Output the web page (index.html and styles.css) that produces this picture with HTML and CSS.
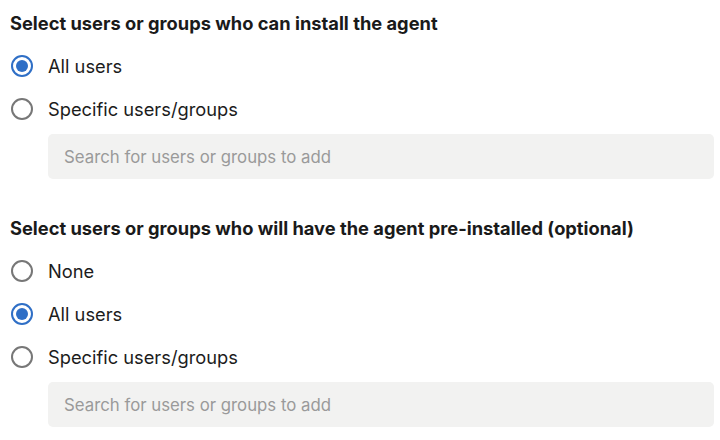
FILE: index.html
```html
<!DOCTYPE html>
<html lang="en">
<head>
<meta charset="utf-8">
<link rel="stylesheet" href="styles.css">
</head>
<body>
<div class="page">
  <section class="group">
    <h2 class="heading">Select users or groups who can install the agent</h2>
    <div class="options">
      <label class="option"><span class="radio checked"></span><span class="label">All users</span></label>
      <label class="option"><span class="radio"></span><span class="label">Specific users/groups</span></label>
    </div>
    <div class="search">Search for users or groups to add</div>
  </section>
  <section class="group">
    <h2 class="heading">Select users or groups who will have the agent pre-installed (optional)</h2>
    <div class="options">
      <label class="option"><span class="radio"></span><span class="label">None</span></label>
      <label class="option"><span class="radio checked"></span><span class="label">All users</span></label>
      <label class="option"><span class="radio"></span><span class="label">Specific users/groups</span></label>
    </div>
    <div class="search">Search for users or groups to add</div>
  </section>
</div>
</body>
</html>
```
FILE: styles.css
```css
html, body {
  margin: 0;
  padding: 0;
  background: #ffffff;
}
body {
  font-family: Inter, "Noto Sans", sans-serif;
  color: #1c1c1c;
}
.page {
  padding: 10px 6px 0 10px;
  display: flex;
  flex-direction: column;
  gap: 36px;
}
.group {
  display: flex;
  flex-direction: column;
}
.heading {
  margin: 0;
  font-size: 18.3px;
  font-weight: 700;
  line-height: 26px;
  color: #1a1a1a;
}
.options {
  display: flex;
  flex-direction: column;
  margin-top: 8px;
}
.option {
  display: flex;
  align-items: center;
  gap: 15px;
  height: 43px;
  padding-left: 1px;
}
.radio {
  width: 22px;
  height: 22px;
  box-sizing: border-box;
  border: 2px solid #777777;
  border-radius: 50%;
  display: flex;
  align-items: center;
  justify-content: center;
  flex: none;
}
.radio.checked {
  border-color: #2f6fc6;
}
.radio.checked::after {
  content: "";
  width: 12px;
  height: 12px;
  border-radius: 50%;
  background: #2f6fc6;
}
.label {
  font-size: 18.3px;
  color: #1c1c1c;
}
.search {
  margin: 4px 0 0 38px;
  height: 45px;
  box-sizing: border-box;
  padding: 0 16px;
  display: flex;
  align-items: center;
  background: #f2f2f1;
  border-radius: 5px;
  font-size: 16.8px;
  color: #9a9a9a;
}
```
